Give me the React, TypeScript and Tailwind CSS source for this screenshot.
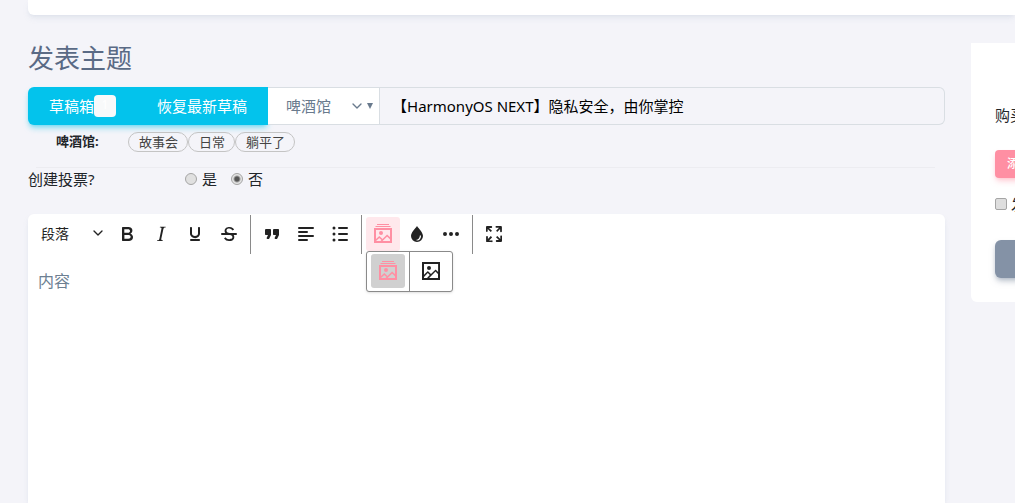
import type { ReactNode } from "react";
import { ChevronDown } from "lucide-react";
import clsx from "clsx";

const tags = ["故事会", "日常", "躺平了"];

function Icon({ children }: { children: ReactNode }) {
    return (
        <svg viewBox="0 0 24 24" className="size-6" fill="currentColor" aria-hidden="true">
            {children}
        </svg>
    );
}

const icons = {
    bold: <path fillRule="evenodd" d="M7.8 19c-.3 0-.5 0-.6-.2l-.2-.5V5.7c0-.2 0-.4.2-.5l.6-.2h5c1.5 0 2.7.3 3.5 1 .7.6 1.1 1.4 1.1 2.5a3 3 0 0 1-.6 1.9c-.4.6-1 1-1.6 1.2.4.1.9.3 1.3.6s.8.7 1 1.2c.4.4.5 1 .5 1.6 0 1.3-.4 2.3-1.3 3-.8.7-2.1 1-3.8 1H7.8Zm5-8.3c.6 0 1.2-.1 1.6-.5.4-.3.6-.7.6-1.3 0-1.1-.8-1.7-2.3-1.7H9.3v3.5h3.4Zm.5 6c.7 0 1.3-.1 1.7-.4.4-.4.6-.9.6-1.5s-.2-1-.7-1.4c-.4-.3-1-.4-2-.4H9.4v3.8h4Z" />,
    italic: <path d="m16.7 4.7-.1.9h-.3c-.6 0-1 0-1.4.3-.3.3-.4.6-.5 1.1l-2.1 9.8v.6c0 .5.4.8 1.4.8h.2l-.2.8H8l.2-.8h.2c1.1 0 1.8-.5 2-1.5l2-9.8.1-.5c0-.6-.4-.8-1.4-.8h-.3l.2-.9h5.8Z" />,
    underline: <path d="M16 5c.6 0 1 .4 1 1v5.5a4 4 0 0 1-.4 1.8l-1 1.4a5.3 5.3 0 0 1-5.5 1 5 5 0 0 1-1.6-1c-.5-.4-.8-.9-1.1-1.4a4 4 0 0 1-.4-1.8V6c0-.6.4-1 1-1s1 .4 1 1v5.5c0 .3 0 .6.2 1l.6.7a3.3 3.3 0 0 0 2.2.8 3.4 3.4 0 0 0 2.2-.8c.3-.2.4-.5.6-.8l.2-.9V6c0-.6.4-1 1-1ZM8 17h8c.6 0 1 .4 1 1s-.4 1-1 1H8a1 1 0 0 1 0-2Z" />,
    strike: (
        <>
            <path d="M15.6 8.5c-.5-.7-1-1.1-1.3-1.3-.6-.4-1.3-.6-2-.6-2.7 0-2.8 1.7-2.8 2.1 0 1.6 1.8 2 3.2 2.3 4.4.9 4.6 2.8 4.6 3.9 0 1.4-.7 4.1-5 4.1A6.2 6.2 0 0 1 7 16.4l1.5-1.1c.4.6 1.6 2 3.7 2 1.6 0 2.5-.4 3-1.2.4-.8.3-2-.8-2.6-.7-.4-1.6-.7-2.9-1-1-.2-3.9-.8-3.9-3.6C7.6 6 10.3 5 12.4 5c2.9 0 4.2 1.6 4.7 2.4l-1.5 1.1Z" />
            <path d="M5 11h14a1 1 0 0 1 0 2H5a1 1 0 0 1 0-2Z" />
        </>
    ),
    quote: <path d="M7.5 17h.9c.4 0 .7-.2.9-.6L11 13V8c0-.6-.4-1-1-1H6a1 1 0 0 0-1 1v4c0 .6.4 1 1 1h2l-1.3 2.7a1 1 0 0 0 .8 1.3Zm8 0h.9c.4 0 .7-.2.9-.6L19 13V8c0-.6-.4-1-1-1h-4a1 1 0 0 0-1 1v4c0 .6.4 1 1 1h2l-1.3 2.7a1 1 0 0 0 .8 1.3Z" />,
    alignLeft: <path d="M5 5h14a1 1 0 0 1 0 2H5a1 1 0 1 1 0-2Zm0 4h8a1 1 0 0 1 0 2H5a1 1 0 1 1 0-2Zm0 8h8a1 1 0 0 1 0 2H5a1 1 0 0 1 0-2Zm0-4h14a1 1 0 0 1 0 2H5a1 1 0 0 1 0-2Z" />,
    list: <path d="M11 5h8a1 1 0 0 1 0 2h-8a1 1 0 0 1 0-2Zm0 6h8a1 1 0 0 1 0 2h-8a1 1 0 0 1 0-2Zm0 6h8a1 1 0 0 1 0 2h-8a1 1 0 0 1 0-2ZM4.5 6a1.5 1.5 0 1 1 3 0 1.5 1.5 0 0 1-3 0Zm0 6a1.5 1.5 0 1 1 3 0 1.5 1.5 0 0 1-3 0Zm0 6a1.5 1.5 0 1 1 3 0 1.5 1.5 0 0 1-3 0Z" />,
    gallery: (
        <>
            <path d="M6 2h12v1H6ZM4.5 4h15v1h-15Z" />
            <path fillRule="evenodd" d="M3 6h18v15H3V6Zm2 2v11h14V8H5Z" />
            <circle cx="10" cy="11" r="2" />
            <path fill="none" stroke="currentColor" strokeWidth="1.6" d="m4.5 18.5 3.8-3.5 2.7 2.5M9.5 20l6.600-6.500 3.600 3.300" />
        </>
    ),
    image: <path fillRule="evenodd" d="m5 15.7 3.3-3.2c.3-.3.7-.3 1 0L12 15l4.1-4c.3-.4.8-.4 1 0l2 1.9V5H5v10.7ZM5 18V19h3l2.8-2.9-2-2L5 17.9Zm14-3-2.5-2.4-6.4 6.5H19v-4ZM3 3h18v18H3V3Zm7 8a2 2 0 1 0 0-4 2 2 0 0 0 0 4Z" />,
    drop: <path fillRule="evenodd" d="M12 4c-2 3-6 6.5-6 10a6 6 0 0 0 12 0c0-3.500-4-7-6-10Zm0 14.500c2.500 0 4-1.800 4-4.500l-1-1c-.3 3-1.500 4.500-4 5l1 .5Z" />,
    more: <path d="M6 10a2 2 0 1 0 0 4 2 2 0 0 0 0-4Zm12 0a2 2 0 1 0 0 4 2 2 0 0 0 0-4Zm-6 0a2 2 0 1 0 0 4 2 2 0 0 0 0-4Z" />,
    fullscreen: <path d="m15.3 10-1.2-1.3 2.9-3h-2.3a.9.9 0 1 1 0-1.7H19c.5 0 .9.4.9.9v4.4a.9.9 0 1 1-1.8 0V7l-2.9 3Zm0 4 3 3v-2.3a.9.9 0 1 1 1.7 0V19c0 .5-.4.9-.9.9h-4.4a.9.9 0 1 1 0-1.8H17l-3-2.9 1.3-1.2ZM10 15.4l-2.9 3h2.3a.9.9 0 1 1 0 1.7H5a.9.9 0 0 1-.9-.9v-4.4a.9.9 0 1 1 1.8 0V17l2.9-3 1.2 1.3ZM8.7 10 5.7 7v2.3a.9.9 0 0 1-1.7 0V5c0-.5.4-.9.9-.9h4.4a.9.9 0 0 1 0 1.8H7l3 2.9-1.3 1.2Z" />,
};

function ToolButton({ icon, label, className }: { icon: keyof typeof icons; label: string; className?: string }) {
    return (
        <button type="button" aria-label={label} className={clsx("size-[34px] shrink-0 rounded-[3px] flex items-center justify-center", className)}>
            <Icon>{icons[icon]}</Icon>
        </button>
    );
}

function Radio({ label, checked }: { label: string; checked?: boolean }) {
    return (
        <label className="flex items-center gap-[5px]">
            <input
                type="radio"
                name="poll"
                defaultChecked={checked}
                className="appearance-none size-3 rounded-full border border-[#a5a5a5] bg-[#e0e0e0] checked:bg-[radial-gradient(circle,#555_2px,#e4e4e4_4px)]"
            />
            {label}
        </label>
    );
}

function Toolbar() {
    return (
        <div className="flex pt-px text-[#222]">
            <div className="flex pl-[5px] pr-1 pt-[2px] pb-[3px] border-r border-[#8a8a8a]">
                <div className="relative w-[77px]">
                    <select aria-label="段落格式" className="appearance-none w-full h-[34px] px-2 text-sm bg-transparent">
                        <option>段落</option>
                    </select>
                    <ChevronDown className="absolute right-1 top-2 size-4 pointer-events-none" />
                </div>
                <ToolButton icon="bold" label="粗体" />
                <ToolButton icon="italic" label="斜体" />
                <ToolButton icon="underline" label="下划线" />
                <ToolButton icon="strike" label="删除线" />
            </div>
            <div className="flex px-1 pt-[2px] pb-[3px] border-r border-[#8a8a8a]">
                <ToolButton icon="quote" label="引用" />
                <ToolButton icon="alignLeft" label="左对齐" />
                <ToolButton icon="list" label="项目符号" />
            </div>
            <div className="relative flex px-1 pt-[2px] pb-[3px] border-r border-[#8a8a8a]">
                <ToolButton icon="gallery" label="图库" className="bg-[#ffe8ec] text-[#ff8fa3]" />
                <ToolButton icon="drop" label="颜色" />
                <ToolButton icon="more" label="更多" />
                <div className="absolute left-1 top-9 flex bg-white border border-[#8a8a8a] rounded-[3px] shadow-sm">
                    <div className="px-1 pt-[2px] pb-[3px] border-r border-[#8a8a8a]">
                        <ToolButton icon="gallery" label="相册" className="bg-[#d0d0d0] text-[#ff8fa3]" />
                    </div>
                    <div className="px-1 pt-[2px] pb-[3px]">
                        <ToolButton icon="image" label="图片" />
                    </div>
                </div>
            </div>
            <div className="flex px-1 pt-[2px] pb-[3px]">
                <ToolButton icon="fullscreen" label="全屏" />
            </div>
        </div>
    );
}

function Sidebar() {
    return (
        <aside className="w-11 mt-7 shrink-0 self-start overflow-hidden whitespace-nowrap bg-white rounded-bl-md pl-6 pt-[60px] pb-6">
            <p className="leading-6">购买</p>
            <button type="button" className="mt-[23px] h-7 px-3 rounded bg-[#ff8fa3] text-white text-xs font-medium shadow-md shadow-[#ff8fa3]/40">
                添加
            </button>
            <label className="mt-3.5 h-6 flex items-center gap-1">
                <input type="checkbox" className="appearance-none size-3 shrink-0 rounded-[2px] border border-[#a5a5a5] bg-[#dedede]" />
                发
            </label>
            <button type="button" aria-label="发布" className="mt-6 block h-[38px] w-40 rounded-md bg-[#8492a6] shadow-md shadow-[#8492a6]/50" />
        </aside>
    );
}

export default function App() {
    return (
        <div className="h-screen flex flex-col overflow-hidden bg-[#f4f4f9] pl-7 text-[15px] text-[#212529] font-['Noto_Sans','Noto_Sans_CJK_SC',sans-serif]">
            <div className="h-[15px] shrink-0 bg-white rounded-bl-md shadow-md shadow-slate-400/15" />
            <div className="flex flex-1 gap-[26px] min-h-0">
                <main className="flex-1 min-w-0 flex flex-col pt-6">
                    <h1 className="text-[26px] leading-[38px] text-[#5a6a85]">发表主题</h1>
                    <div className="flex h-[38px] mt-2.5 shrink-0">
                        <div className="flex bg-[#03c3ec] text-white rounded-l-md shadow-md shadow-[#03c3ec]/40">
                            <button type="button" className="pl-[21px] pr-5 flex items-center">
                                草稿箱
                                <span className="w-[22px] h-[22px] rounded bg-[#f8f9fa] text-xs leading-5 text-white">1</span>
                            </button>
                            <button type="button" className="px-[21px]">恢复最新草稿</button>
                        </div>
                        <div className="relative w-28 bg-white border-y border-r border-[#d9dee3] text-[#697a8d]">
                            <select aria-label="版块" className="appearance-none w-full h-full pl-[18px] bg-transparent">
                                <option>啤酒馆</option>
                            </select>
                            <ChevronDown strokeWidth={2} className="absolute right-3.5 top-2.5 size-4 pointer-events-none" />
                            <svg viewBox="0 0 6 6" className="absolute right-1.5 top-[15px] size-1.5 pointer-events-none" fill="currentColor" aria-hidden="true">
                                <path d="M0 0h6L3 6Z" />
                            </svg>
                        </div>
                        <input
                            type="text"
                            aria-label="标题"
                            defaultValue="【HarmonyOS NEXT】隐私安全，由你掌控"
                            className="flex-1 min-w-0 px-3 border border-l-0 border-[#d9dee3] rounded-r-md text-black"
                        />
                    </div>
                    <div className="flex items-center mt-[7px] pl-7 text-[13px] h-5 shrink-0">
                        <span className="w-[72px] font-bold">啤酒馆:</span>
                        {tags.map((tag) => (
                            <button key={tag} type="button" className="h-5 pl-2.5 pr-[9px] leading-4 border border-[#c4c4c4] rounded-full text-[#444]">
                                {tag}
                            </button>
                        ))}
                    </div>
                    <hr className="mt-[15px] ml-2 mr-2.5 border-[#ececf1]" />
                    <div className="flex h-[22px] shrink-0 items-center">
                        <span className="w-[157px]">创建投票?</span>
                        <div className="flex gap-3.5">
                            <Radio label="是" />
                            <Radio label="否" checked />
                        </div>
                    </div>
                    <section className="flex-1 mt-6 flex flex-col bg-white rounded-t-md shadow-md shadow-slate-400/15">
                        <Toolbar />
                        <textarea aria-label="内容" placeholder="内容" className="flex-1 resize-none px-2.5 py-[15px] text-base placeholder:text-[#6d7f92] focus:outline-none" />
                    </section>
                </main>
                <Sidebar />
            </div>
        </div>
    );
}
